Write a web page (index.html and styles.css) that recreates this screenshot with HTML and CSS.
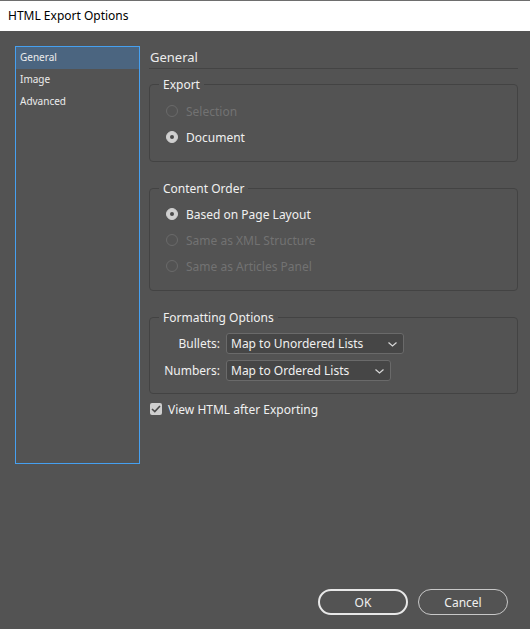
FILE: index.html
```html
<!DOCTYPE html>
<html lang="en">
<head>
    <meta charset="UTF-8">
    <title>HTML Export Options</title>
    <link rel="stylesheet" href="styles.css">
</head>
<body>
    <div class="titlebar">HTML Export Options</div>

    <div class="dialog">
        <ul class="sections">
            <li class="active">General</li>
            <li>Image</li>
            <li>Advanced</li>
        </ul>

        <div class="panel">
            <h2>General</h2>

            <fieldset class="group export">
                <legend>Export</legend>
                <label class="radio disabled"><span class="dot"></span>Selection</label>
                <label class="radio checked"><span class="dot"></span>Document</label>
            </fieldset>

            <fieldset class="group order">
                <legend>Content Order</legend>
                <label class="radio checked"><span class="dot"></span>Based on Page Layout</label>
                <label class="radio disabled"><span class="dot"></span>Same as XML Structure</label>
                <label class="radio disabled"><span class="dot"></span>Same as Articles Panel</label>
            </fieldset>

            <fieldset class="group formatting">
                <legend>Formatting Options</legend>
                <div class="field">
                    <span class="field-label">Bullets:</span>
                    <div class="select bullets">Map to Unordered Lists
                        <svg class="chevron" width="9" height="5" viewBox="0 0 9 5"><path d="M0.5 0.5 L4.5 4 L8.5 0.5" fill="none" stroke="#d8d8d8" stroke-width="1.2"/></svg>
                    </div>
                </div>
                <div class="field">
                    <span class="field-label">Numbers:</span>
                    <div class="select numbers">Map to Ordered Lists
                        <svg class="chevron" width="9" height="5" viewBox="0 0 9 5"><path d="M0.5 0.5 L4.5 4 L8.5 0.5" fill="none" stroke="#d8d8d8" stroke-width="1.2"/></svg>
                    </div>
                </div>
            </fieldset>

            <label class="check">
                <span class="box">
                    <svg width="10" height="8" viewBox="0 0 10 8"><path d="M1 4 L3.8 6.6 L9 1" fill="none" stroke="#4a4a4a" stroke-width="1.6"/></svg>
                </span>
                View HTML after Exporting
            </label>
        </div>
    </div>

    <div class="buttons">
        <button class="primary">OK</button>
        <button>Cancel</button>
    </div>
</body>
</html>
```

FILE: styles.css
```css
/* Dialog base */
body {
    margin: 0;
    padding: 0;
    background-color: #535353;
    color: #f0f0f0;
    font-family: "Noto Sans", "Open Sans", sans-serif;
    font-size: 12px;
    height: 629px;
    overflow: hidden;
    position: relative;
}

.titlebar {
    height: 30px;
    line-height: 30px;
    border-top: 1px solid #6e6e6e;
    background-color: #fff;
    color: #000;
    padding-left: 8px;
    font-size: 12px;
}

.dialog {
    display: flex;
    gap: 9px;
    padding: 15px 0 0 15px;
}

/* Left list */
.sections {
    list-style: none;
    margin: 0;
    padding: 0;
    width: 123px;
    height: 416px;
    border: 1px solid #46a0f0;
    font-size: 10px;
}

.sections li {
    height: 22px;
    line-height: 21px;
    padding-left: 4px;
    color: #ececec;
}

.sections li.active {
    background-color: #4b6580;
}

/* Right panel */
.panel {
    width: 369px;
}

.panel h2 {
    margin: 0;
    font-size: 13px;
    font-weight: normal;
    color: #ececec;
    height: 21px;
    line-height: 21px;
    padding-left: 1px;
    border-bottom: 1px solid #444;
    margin-top: 1px;
}

.group {
    margin: 0;
    padding: 4px 0 11px 0;
    border: 1px solid #434343;
    border-radius: 4px;
    min-width: 0;
}

.group legend {
    margin-left: 9px;
    padding: 0 4px;
    font-size: 12px;
    line-height: 17px;
    color: #f0f0f0;
}

.group.export {
    margin-top: 7px;
    padding-top: 5px;
}

.group.order,
.group.formatting {
    margin-top: 18px;
}

.group.formatting {
    padding-top: 4px;
    padding-bottom: 9px;
}

/* Radio buttons */
.radio {
    display: flex;
    align-items: center;
    height: 26px;
    gap: 8px;
    margin-left: 16px;
    color: #f0f0f0;
}

.radio .dot {
    width: 10px;
    height: 10px;
    border-radius: 50%;
    border: 1px solid #6a6a6a;
    position: relative;
}

.radio.disabled {
    color: #727272;
}

.radio.checked .dot {
    background-color: #cfcfcf;
    border-color: #cfcfcf;
}

.radio.checked .dot::after {
    content: "";
    position: absolute;
    left: 3px;
    top: 3px;
    width: 4px;
    height: 4px;
    border-radius: 50%;
    background-color: #4a4a4a;
}

/* Dropdown fields */
.field {
    display: flex;
    align-items: center;
    height: 27px;
}

.field-label {
    width: 70px;
    text-align: right;
    padding-right: 6px;
}

.select {
    height: 19px;
    line-height: 19px;
    background-color: #464646;
    border: 1px solid #6a6a6a;
    border-radius: 3px;
    padding-left: 4px;
    position: relative;
}

.select.bullets {
    width: 172px;
}

.select.numbers {
    width: 159px;
}

.select .chevron {
    position: absolute;
    right: 6px;
    top: 8px;
}

/* Checkbox */
.check {
    display: flex;
    align-items: center;
    gap: 6px;
    margin-top: 8px;
    margin-left: 1px;
    height: 14px;
}

.check .box {
    width: 12px;
    height: 12px;
    background-color: #cfcfcf;
    border-radius: 2px;
    display: flex;
    align-items: center;
    justify-content: center;
}

/* Bottom buttons */
.buttons {
    position: absolute;
    right: 22px;
    bottom: 14px;
    display: flex;
    gap: 10px;
}

.buttons button {
    width: 90px;
    height: 26px;
    border-radius: 13px;
    border: 1px solid #c8c8c8;
    background: transparent;
    color: #f0f0f0;
    font-family: inherit;
    font-size: 12px;
    padding: 0;
}

.buttons button.primary {
    border: 2px solid #e8e8e8;
}
```
